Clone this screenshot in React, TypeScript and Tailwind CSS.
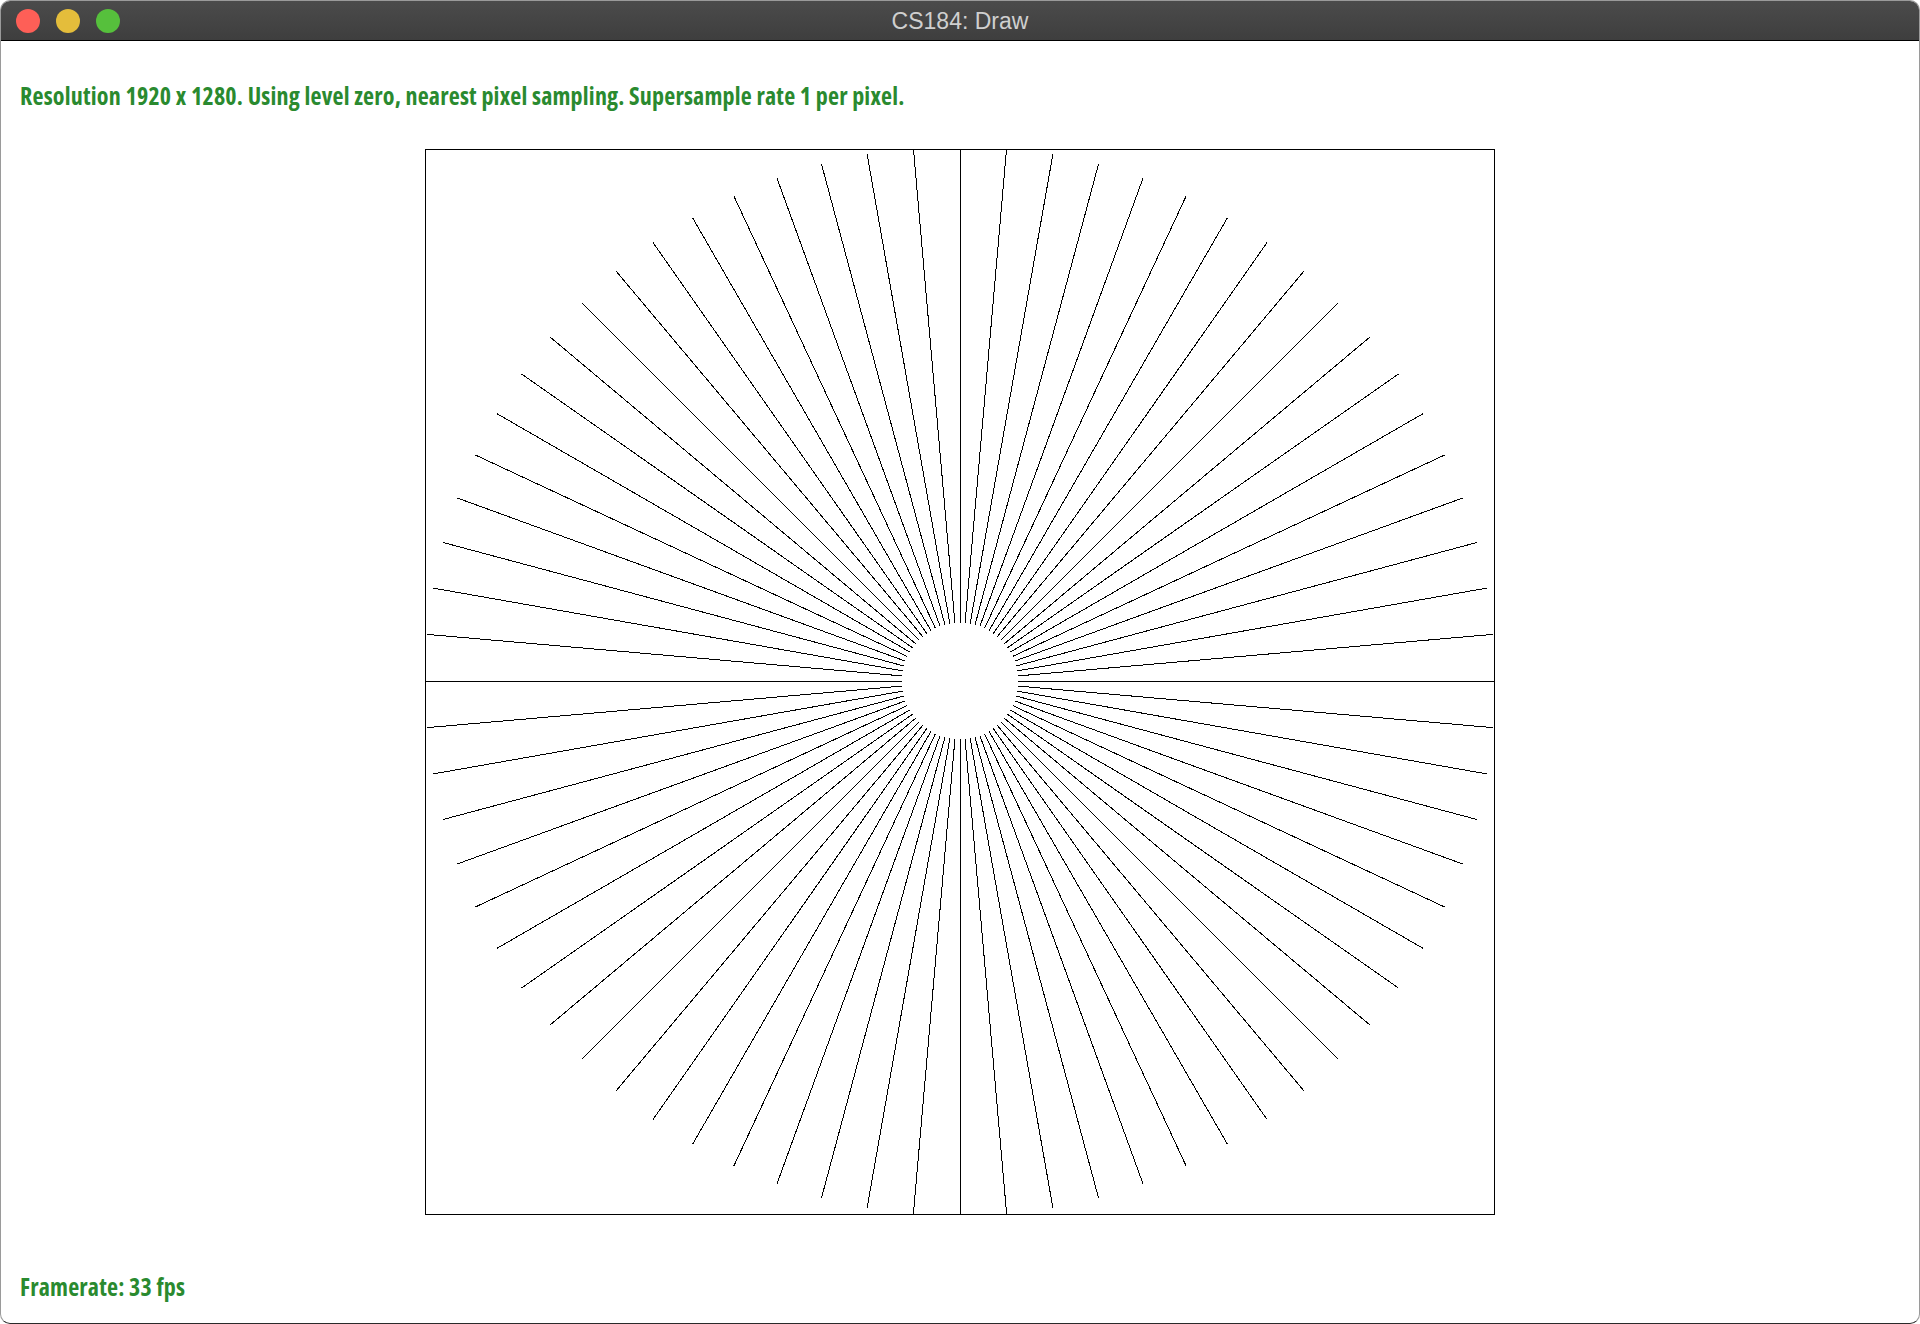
import React from "react";

const CX = 535;
const CY = 532;
const R_IN = 58;
const R_OUT = 535;

function Starburst() {
    const lines = [];
    for (let k = 0; k < 72; k++) {
        const a = (k * 5 * Math.PI) / 180;
        const c = Math.cos(a);
        const s = Math.sin(a);
        lines.push(
            <line
                key={k}
                x1={CX + R_IN * c}
                y1={CY - R_IN * s}
                x2={CX + R_OUT * c}
                y2={CY - R_OUT * s}
                stroke="#000"
                strokeWidth={1}
            />
        );
    }
    return (
        <svg width={1070} height={1066} viewBox="0 0 1070 1066" shapeRendering="crispEdges" className="block">
            <rect x={0.5} y={0.5} width={1069} height={1065} fill="#fff" stroke="#000" strokeWidth={1} />
            {lines}
        </svg>
    );
}

export default function App() {
    return (
        <div className="w-[1920px] h-[1324px] bg-white">
            <div className="w-full h-full flex flex-col rounded-[10px] overflow-hidden border border-[#9a9a9a] border-b-[#2a2a2a] bg-white">
                {/* Title bar */}
                <div className="relative h-[40px] shrink-0 flex items-center bg-gradient-to-b from-[#4b4b4b] to-[#3e3e3e] border-b border-black">
                    <div className="flex items-center gap-[16px] pl-[15px]">
                        <span className="w-[24px] h-[24px] rounded-full bg-[#fe5f57]" />
                        <span className="w-[24px] h-[24px] rounded-full bg-[#e4bd3b]" />
                        <span className="w-[24px] h-[24px] rounded-full bg-[#56c03c]" />
                    </div>
                    <div className="absolute inset-0 flex items-center justify-center pt-[2px] text-[23px] text-[#cfcfcf] font-['Liberation_Sans',sans-serif]">
                        CS184: Draw
                    </div>
                </div>

                {/* Content */}
                <div className="flex-1 flex flex-col font-['Open_Sans',sans-serif] font-bold font-stretch-condensed text-[24px] tracking-[0.2px] text-[#2a8a2f]">
                    <div className="pl-[19px] pt-[40px] leading-[30px]">
                        Resolution 1920 x 1280. Using level zero, nearest pixel sampling. Supersample rate 1 per pixel.
                    </div>
                    <div className="flex justify-center pt-[38px]">
                        <Starburst />
                    </div>
                    <div className="mt-auto pl-[19px] pb-[21px] leading-[30px]">Framerate: 33 fps</div>
                </div>
            </div>
        </div>
    );
}
